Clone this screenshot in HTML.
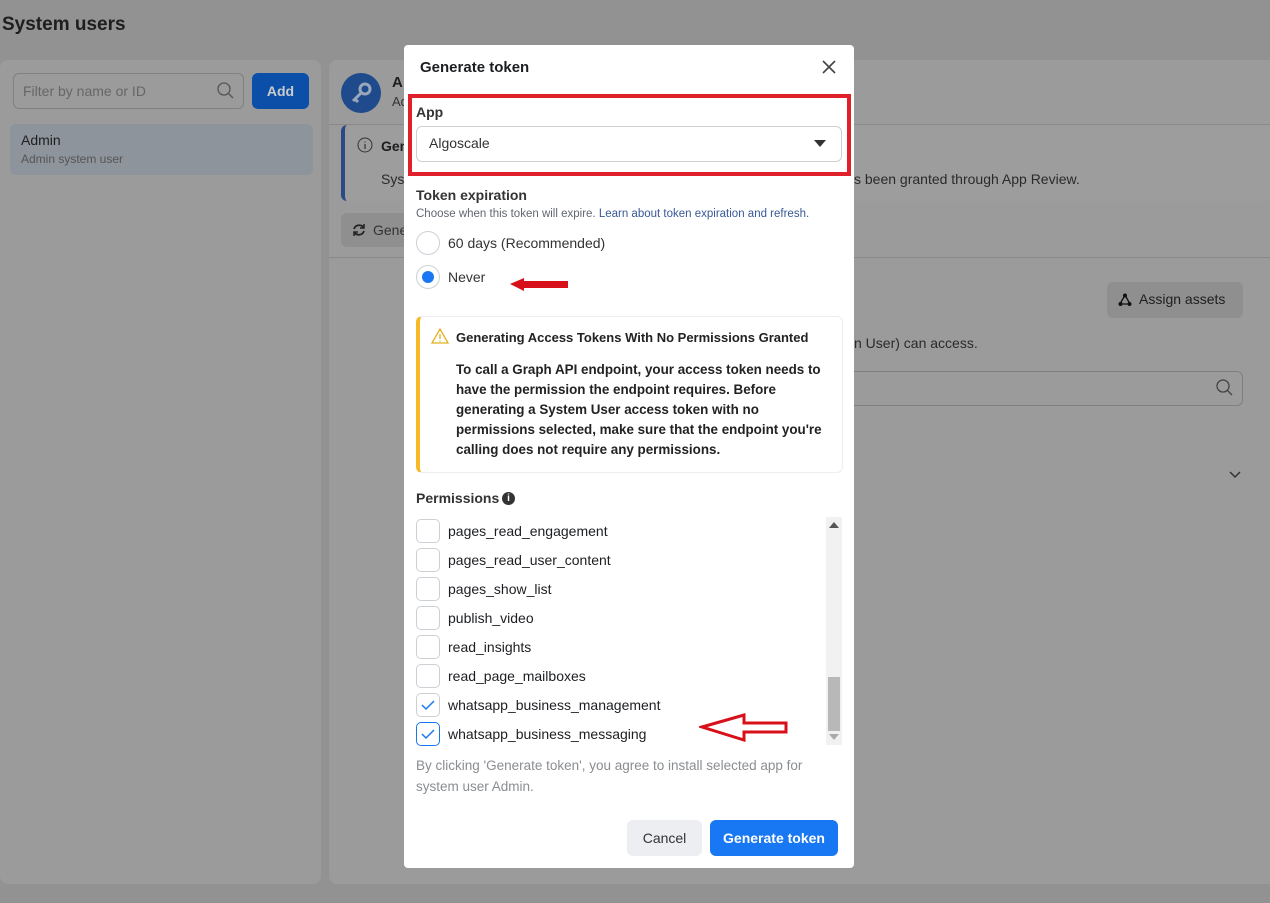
<!DOCTYPE html>
<html><head><meta charset="utf-8"><style>
*{box-sizing:border-box;margin:0;padding:0}
body{width:1270px;height:903px;background:#929292;font-family:"Liberation Sans",Arial,sans-serif;position:relative;overflow:hidden;color:#1c1e21}
.a{position:absolute}
.panel{background:#9b9b9b;border-radius:8px}
.t{color:#1e1e1e}
.modal{position:absolute;left:404px;top:45px;width:450px;height:823px;background:#fff;border-radius:4px}
.cb{position:absolute;left:12px;width:24px;height:24px;border:1px solid #ccd0d5;border-radius:5px}
.perm{position:absolute;left:44px;font-size:14px;color:#1c1e21}
</style></head><body>
<div class="a t" style="left:2px;top:14px;font-size:19px;font-weight:bold">System users</div>
<div class="a panel" style="left:0;top:60px;width:321px;height:824px"></div>
<div class="a" style="left:13px;top:73px;width:231px;height:36px;border:1px solid #808080;border-radius:6px"></div>
<div class="a" style="left:23px;top:83px;font-size:14px;color:#666">Filter by name or ID</div>
<svg class="a" style="left:216px;top:81px" width="20" height="20"><circle cx="8" cy="8" r="6" fill="none" stroke="#555" stroke-width="1.3"/><line x1="12.5" y1="12.5" x2="17" y2="17" stroke="#555" stroke-width="1.3"/></svg>
<div class="a" style="left:252px;top:73px;width:57px;height:36px;background:#0b4fa8;border-radius:6px;color:#ccc;font-weight:bold;font-size:14px;text-align:center;line-height:36px">Add</div>
<div class="a" style="left:10px;top:124px;width:303px;height:51px;background:#8e949c;border-radius:6px"></div>
<div class="a t" style="left:21px;top:132px;font-size:14px">Admin</div>
<div class="a" style="left:21px;top:152px;font-size:12px;color:#555">Admin system user</div>

<div class="a panel" style="left:329px;top:60px;width:950px;height:824px"></div>
<div class="a" style="left:341px;top:73px;width:40px;height:40px;border-radius:50%;background:#1f4b8c"></div>
<svg class="a" style="left:341px;top:73px" width="40" height="40"><circle cx="24" cy="16" r="5" fill="none" stroke="#9aa6bb" stroke-width="3"/><path d="M20 20l-8 8M14 26l3 3" stroke="#9aa6bb" stroke-width="3"/></svg>
<div class="a t" style="left:392px;top:74px;font-size:15px;font-weight:bold">A</div>
<div class="a" style="left:392px;top:94px;font-size:13px;color:#333">Ad</div>
<div class="a" style="left:329px;top:124px;width:950px;height:1px;background:#8a8a8a"></div>
<div class="a" style="left:341px;top:125px;width:940px;height:76px;border-left:4px solid #284a86;border-radius:6px;background:#9d9d9d"></div>
<svg class="a" style="left:357px;top:137px" width="16" height="16"><circle cx="8" cy="8" r="7" fill="none" stroke="#333" stroke-width="1"/><path d="M8 7v5M8 4.5v1" stroke="#333" stroke-width="1.2"/></svg>
<div class="a t" style="left:381px;top:138px;font-size:14px;font-weight:bold">Gen</div>
<div class="a" style="left:381px;top:171px;font-size:14px;color:#2a2a2a">Sys</div>
<div class="a" style="left:854px;top:171px;font-size:14px;color:#2a2a2a">s been granted through App Review.</div>
<div class="a" style="left:341px;top:213px;width:80px;height:34px;background:#8f8f8f;border-radius:6px"></div>
<svg class="a" style="left:352px;top:223px" width="14" height="14"><path d="M12 5A5.5 5.5 0 0 0 2 6M2 9a5.5 5.5 0 0 0 10-1" fill="none" stroke="#222" stroke-width="1.8"/><path d="M12 1v4H8M2 13V9h4" fill="none" stroke="#222" stroke-width="1.5"/></svg>
<div class="a" style="left:373px;top:222px;font-size:14px;color:#333">Gene</div>
<div class="a" style="left:329px;top:257px;width:950px;height:1px;background:#8a8a8a"></div>
<div class="a" style="left:1107px;top:282px;width:136px;height:36px;background:#8f8f8f;border-radius:6px"></div>
<div class="a" style="left:1139px;top:291px;font-size:14px;color:#1e1e1e">Assign assets</div>
<svg class="a" style="left:1118px;top:293px" width="14" height="14"><path d="M7 2L2 11h10z" fill="none" stroke="#111" stroke-width="1.3"/><circle cx="7" cy="2.5" r="2" fill="#111"/><circle cx="2.5" cy="11" r="2" fill="#111"/><circle cx="11.5" cy="11" r="2" fill="#111"/></svg>
<div class="a" style="left:854px;top:335px;font-size:14px;color:#2a2a2a">n User) can access.</div>
<div class="a" style="left:840px;top:371px;width:403px;height:35px;border:1px solid #7f7f7f;border-radius:6px"></div>
<svg class="a" style="left:1215px;top:378px" width="20" height="20"><circle cx="8" cy="8" r="6" fill="none" stroke="#444" stroke-width="1.3"/><line x1="12.5" y1="12.5" x2="17" y2="17" stroke="#444" stroke-width="1.3"/></svg>
<svg class="a" style="left:1228px;top:470px" width="14" height="10"><path d="M2 2l5 5 5-5" fill="none" stroke="#333" stroke-width="1.5"/></svg>

<div class="modal">
 <div class="a" style="left:16px;top:14px;font-size:15px;font-weight:bold">Generate token</div>
 <svg class="a" style="left:418px;top:15px" width="14" height="14"><path d="M1 1l12 12M13 1L1 13" stroke="#444" stroke-width="1.6"/></svg>
 <div class="a" style="left:4px;top:49px;width:443px;height:82px;border:4px solid #e0202a"></div>
 <div class="a" style="left:12px;top:59px;font-size:14px;font-weight:bold;color:#333">App</div>
 <div class="a" style="left:12px;top:81px;width:426px;height:36px;border:1px solid #ccd0d5;border-radius:6px"></div>
 <div class="a" style="left:25px;top:90px;font-size:14px;color:#333">Algoscale</div>
 <svg class="a" style="left:410px;top:95px" width="12" height="7"><path d="M0 0h12L6 7z" fill="#333"/></svg>
 <div class="a" style="left:12px;top:142px;font-size:14px;font-weight:bold;color:#333">Token expiration</div>
 <div class="a" style="left:12px;top:163px;font-size:11.5px;color:#606770">Choose when this token will expire. <span style="color:#385898">Learn about token expiration and refresh.</span></div>
 <div class="a" style="left:12px;top:186px;width:24px;height:24px;border:1px solid #ccd0d5;border-radius:50%"></div>
 <div class="a" style="left:44px;top:190px;font-size:14px;color:#333">60 days (Recommended)</div>
 <div class="a" style="left:12px;top:220px;width:24px;height:24px;border:1px solid #ccd0d5;border-radius:50%"></div>
 <div class="a" style="left:18px;top:226px;width:12px;height:12px;background:#1877f2;border-radius:50%"></div>
 <div class="a" style="left:44px;top:224px;font-size:14px;color:#333">Never</div>
 <svg class="a" style="left:104px;top:232px" width="60" height="14"><path d="M2 7L16 1v3h46v7H16v3z" fill="#d8101a"/></svg>
 <div class="a" style="left:12px;top:271px;width:427px;height:157px;border:1px solid #eceef1;border-left:4px solid #f7b928;border-radius:6px"></div>
 <svg class="a" style="left:27px;top:283px" width="18" height="16"><path d="M9 1L17 15H1z" fill="none" stroke="#e0b020" stroke-width="1.3"/><path d="M9 6v5M9 12.5v1.2" stroke="#e0b020" stroke-width="1.3"/></svg>
 <div class="a" style="left:52px;top:285px;font-size:13px;font-weight:bold;color:#222">Generating Access Tokens With No Permissions Granted</div>
 <div class="a" style="left:52px;top:315px;width:368px;font-size:13.4px;font-weight:bold;color:#222;line-height:20px">To call a Graph API endpoint, your access token needs to have the permission the endpoint requires. Before generating a System User access token with no permissions selected, make sure that the endpoint you're calling does not require any permissions.</div>
 <div class="a" style="left:12px;top:445px;font-size:14px;font-weight:bold;color:#333">Permissions</div>
 <div class="a" style="left:98px;top:447px;width:13px;height:13px;background:#333;border-radius:50%;color:#fff;font-size:10px;font-weight:bold;text-align:center;line-height:13px">i</div>
 <div class="a" style="left:422px;top:472px;width:16px;height:228px;background:#f1f1f1"></div>
 <div class="a" style="left:424px;top:632px;width:12px;height:54px;background:#b8b8b8"></div>
 <svg class="a" style="left:425px;top:477px" width="10" height="6"><path d="M0 6h10L5 0z" fill="#555"/></svg>
 <svg class="a" style="left:425px;top:689px" width="10" height="6"><path d="M0 0h10L5 6z" fill="#aaa"/></svg>
 <div class="cb" style="top:474px"></div><div class="perm" style="top:478px">pages_read_engagement</div>
 <div class="cb" style="top:503px"></div><div class="perm" style="top:507px">pages_read_user_content</div>
 <div class="cb" style="top:532px"></div><div class="perm" style="top:536px">pages_show_list</div>
 <div class="cb" style="top:561px"></div><div class="perm" style="top:565px">publish_video</div>
 <div class="cb" style="top:590px"></div><div class="perm" style="top:594px">read_insights</div>
 <div class="cb" style="top:619px"></div><div class="perm" style="top:623px">read_page_mailboxes</div>
 <div class="cb" style="top:648px"></div><svg class="a" style="left:17px;top:654px" width="14" height="12"><path d="M1 6l4 4 8-8" fill="none" stroke="#1877f2" stroke-width="1.5"/></svg><div class="perm" style="top:652px">whatsapp_business_management</div>
 <div class="cb" style="top:677px;border-color:#1877f2"></div><svg class="a" style="left:17px;top:683px" width="14" height="12"><path d="M1 6l4 4 8-8" fill="none" stroke="#1877f2" stroke-width="1.5"/></svg><div class="perm" style="top:681px">whatsapp_business_messaging</div>
 <svg class="a" style="left:295px;top:667px" width="94" height="30"><path d="M3 15L45 3v8h42v9H45v8z" fill="none" stroke="#d8101a" stroke-width="3"/></svg>
 <div class="a" style="left:12px;top:710px;width:420px;font-size:13.5px;color:#8a8d91;line-height:21px">By clicking 'Generate token', you agree to install selected app for system user Admin.</div>
 <div class="a" style="left:223px;top:775px;width:75px;height:36px;background:#eceef1;border-radius:6px;font-size:14px;color:#333;text-align:center;line-height:36px">Cancel</div>
 <div class="a" style="left:306px;top:775px;width:128px;height:36px;background:#1877f2;border-radius:6px;font-size:14px;color:#fff;font-weight:bold;text-align:center;line-height:36px">Generate token</div>
</div>
</body></html>
